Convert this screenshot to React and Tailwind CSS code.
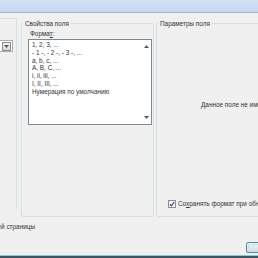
function GroupBox({ label, className, children }) {
  return (
    <div className={`relative rounded-[2px] border border-[#d5dfe5] ${className}`}>
      {label ? (
        <span className="absolute left-[1px] top-[-5px] bg-[#f0f0f0] px-[2px] text-[6.4px] leading-[9px] text-[#333] whitespace-nowrap">
          {label}
        </span>
      ) : null}
      {children}
    </div>
  )
}

function Arrow({ up }) {
  return (
    <svg width="5" height="3" viewBox="0 0 5 3" className="block">
      <path d={up ? 'M0 3 L2.5 0 L5 3 Z' : 'M0 0 L2.5 3 L5 0 Z'} fill="#5a5a5a" />
    </svg>
  )
}

const formats = [
  '1, 2, 3, ...',
  '- 1 -, - 2 -, - 3 -, ...',
  'a, b, c, ...',
  'A, B, C, ...',
  'i, ii, iii, ...',
  'I, II, III, ...',
  'Нумерация по умолчанию',
]

export default function App() {
  return (
    <div className="flex h-[258px] w-[258px] flex-col overflow-hidden bg-[#f0f0f0] font-['Liberation_Sans',Arial,sans-serif] text-[#333]">
      <div className="h-[13px] shrink-0 border-b border-[#a9bbd2] bg-gradient-to-b from-[#d4e3f4] to-[#c4d8ef]" />

      <div className="flex h-[203px] shrink-0 items-start">
        <div className="ml-[-60px] mt-[5px] h-[191px] w-[77px] shrink-0 border-r border-t border-[#d5dfe5] pr-[3px] pt-[21px]">
          <div className="ml-auto flex h-[12px] w-[60px] items-center justify-end border border-[#abadb3] bg-white pr-[1px]">
            <div className="flex h-[9px] w-[9px] items-center justify-center border border-[#8e8f8f] bg-gradient-to-b from-[#f2f2f2] to-[#d8d8d8]">
              <Arrow />
            </div>
          </div>
          <div className="mt-[11px] flex h-[141px] w-[60px] justify-end border border-[#828790] bg-white">
            <div className="relative flex-1">
              <div className="absolute right-0 top-[38px] h-[7px] w-[3px] bg-[#3399ff]" />
            </div>
            <div className="flex w-[10px] flex-col border-l border-[#e6e6e6] bg-[#f4f4f4]">
              <div className="flex h-[9px] items-center justify-center">
                <Arrow up />
              </div>
              <div className="mt-[67px] flex h-[27px] flex-col items-center justify-center gap-[1px] rounded-[2px] border border-[#9c9c9c] bg-gradient-to-r from-[#f4f4f4] to-[#d9d9d9]">
                <div className="h-[1px] w-[4px] bg-[#7a7a7a]" />
                <div className="h-[1px] w-[4px] bg-[#7a7a7a]" />
                <div className="h-[1px] w-[4px] bg-[#7a7a7a]" />
              </div>
              <div className="flex-1" />
              <div className="flex h-[9px] items-center justify-center">
                <Arrow />
              </div>
            </div>
          </div>
        </div>

        <GroupBox label="Свойства поля" className="ml-[4px] mt-[10px] h-[194px] w-[133px] shrink-0">
          <div className="pl-[6px] pr-[1px] pt-[5px]">
            <div className="ml-[2px] text-[6.4px] leading-[9px] text-[#333]">
              Форма<span className="underline">т</span>:
            </div>
            <div className="mt-[1px] flex h-[86px] w-[124px] border border-[#828790] bg-white">
              <div className="flex-1 pl-[3px] pt-[1px]">
                {formats.map((f) => (
                  <div key={f} className="h-[7.8px] whitespace-nowrap text-[6.4px] leading-[8px] text-[#333]">
                    {f}
                  </div>
                ))}
              </div>
              <div className="flex w-[10px] flex-col justify-between py-[5px]">
                <div className="flex justify-center">
                  <Arrow up />
                </div>
                <div className="flex justify-center">
                  <Arrow />
                </div>
              </div>
            </div>
          </div>
        </GroupBox>

        <GroupBox label="Параметры поля" className="ml-[2px] mt-[10px] flex h-[194px] w-[200px] shrink-0 flex-col">
          <div className="flex-1 pl-[44px] pt-[76px] text-[6.4px] leading-[9px] whitespace-nowrap text-[#333]">
            Данное поле не имеет параметров
          </div>
          <div className="mb-[8px] flex items-center gap-[2px] pl-[11px]">
            <div className="flex h-[8px] w-[8px] items-center justify-center border border-[#8f8f8f] bg-gradient-to-br from-[#f0f0f0] to-white">
              <svg width="6" height="6" viewBox="0 0 6 6">
                <path d="M0.8 3.2 L2.4 4.8 L5.2 1.2" fill="none" stroke="#2a4a7a" strokeWidth="1.1" />
              </svg>
            </div>
            <span className="whitespace-nowrap text-[6.4px] leading-[9px] text-[#333]">
              Со<span className="underline">х</span>ранять формат при обновлении
            </span>
          </div>
        </GroupBox>
      </div>

      <div className="mt-[6px] flex h-[9px] shrink-0">
        <div className="ml-[-95px] w-[130px] whitespace-nowrap text-right text-[6.4px] leading-[9px] text-[#333]">
          Описание: Номер текущей страницы
        </div>
      </div>

      <div className="mt-[11px] flex h-[11px] shrink-0">
        <div className="ml-[246px] w-[60px] shrink-0 rounded-[2px] border border-[#3c8fa8] bg-gradient-to-b from-[#f2f2f2] to-[#dadada] p-[1px]">
          <div className="h-full rounded-[1px] border border-[#bfe3ee]" />
        </div>
      </div>

      <div className="flex-1" />
      <div className="h-[1px] shrink-0 bg-[#8fc7d2]" />
      <div className="h-[2px] shrink-0 bg-[#3a5663]" />
    </div>
  )
}
